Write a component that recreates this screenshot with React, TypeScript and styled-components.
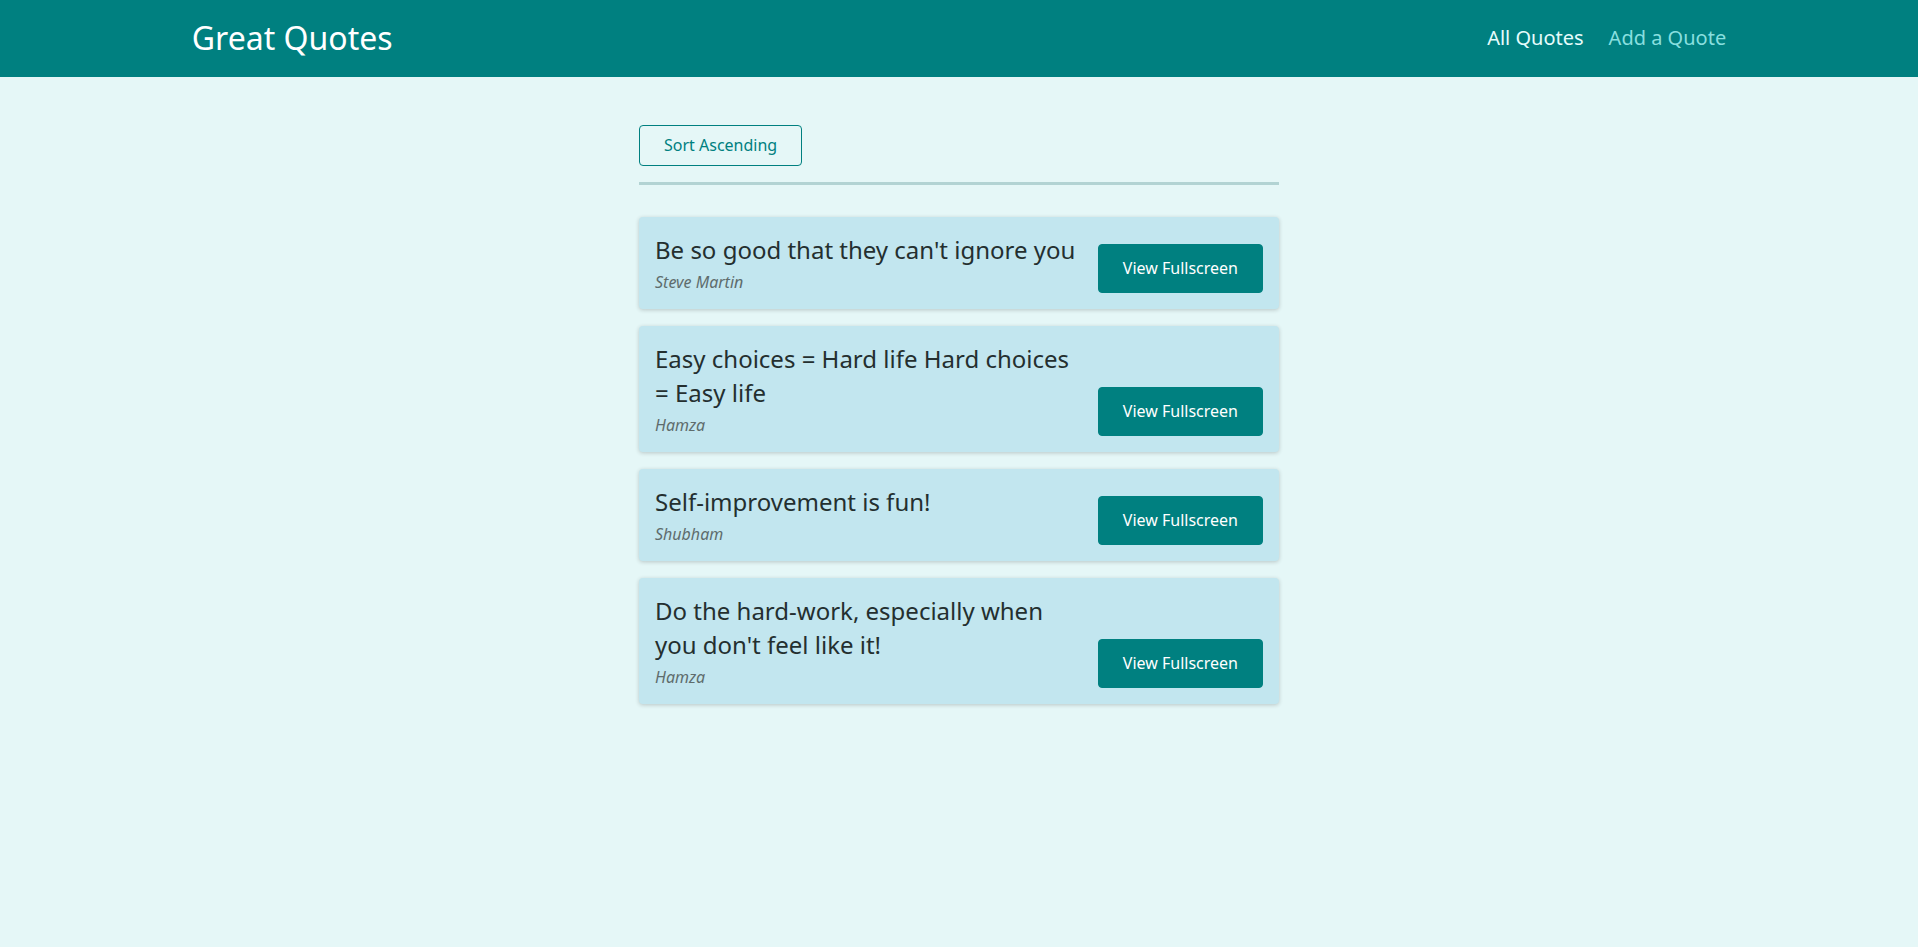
import React from "react";
import styled, { createGlobalStyle } from "styled-components";

const GlobalStyle = createGlobalStyle`
  * { box-sizing: border-box; }
  html, body {
    margin: 0;
    padding: 0;
    background: #e5f7f7;
    font-family: "Noto Sans", "Open Sans", sans-serif;
    min-height: 100%;
  }
`;

const Header = styled.header`
  width: 100%;
  height: 77px;
  display: flex;
  align-items: center;
  justify-content: space-between;
  background: #008080;
  padding: 0 10% 2px;
`;

const Logo = styled.div`
  font-size: 32px;
  color: #ffffff;
`;

const NavList = styled.ul`
  list-style: none;
  margin: 0 0 1px;
  padding: 0;
  display: flex;
  align-items: center;
  gap: 25px;
`;

const NavLink = styled.a<{ $active?: boolean }>`
  font-size: 20px;
  text-decoration: none;
  color: ${(p) => (p.$active ? "#e6fcfc" : "#88dfdf")};
  cursor: pointer;
`;

const Main = styled.main`
  width: 640px;
  margin: 48px auto;
`;

const Sorting = styled.div`
  padding-bottom: 16px;
  border-bottom: 3px solid #b2d3d3;
  margin-bottom: 32px;
`;

const FlatButton = styled.button`
  font-family: inherit;
  font-size: 16px;
  line-height: 23px;
  padding: 8px 24px;
  border: 1px solid #008080;
  border-radius: 4px;
  background: transparent;
  color: #008080;
  cursor: pointer;
`;

const List = styled.ul`
  list-style: none;
  margin: 0;
  padding: 0;
  display: flex;
  flex-direction: column;
  gap: 17px;
`;

const Item = styled.li`
  display: flex;
  align-items: flex-end;
  justify-content: space-between;
  gap: 16px;
  padding: 16px;
  border-radius: 4px;
  background: #c2e6ef;
  box-shadow: 0 1px 4px rgba(0, 0, 0, 0.2);
`;

const Figure = styled.figure`
  margin: 0;
  flex: 1;
  min-width: 0;
`;

const Quote = styled.blockquote`
  margin: 0;
  padding: 0;
  font-size: 24px;
  line-height: 34px;
  color: #242f2f;
`;

const Caption = styled.figcaption`
  margin-top: 4px;
  font-size: 16px;
  line-height: 22px;
  font-style: italic;
  color: #5e6c6c;
`;

const FullButton = styled.a`
  flex-shrink: 0;
  display: inline-block;
  font-size: 16px;
  line-height: 23px;
  padding: 12px 24px;
  border: 1px solid #008080;
  border-radius: 4px;
  background: #008080;
  color: #ffffff;
  text-decoration: none;
  cursor: pointer;
`;

const quotes = [
  { id: 1, text: "Be so good that they can't ignore you", author: "Steve Martin" },
  { id: 2, text: "Easy choices = Hard life Hard choices = Easy life", author: "Hamza" },
  { id: 3, text: "Self-improvement is fun!", author: "Shubham" },
  { id: 4, text: "Do the hard-work, especially when you don't feel like it!", author: "Hamza" },
];

export default function App() {
  return (
    <>
      <GlobalStyle />
      <Header>
        <Logo>Great Quotes</Logo>
        <nav>
          <NavList>
            <li>
              <NavLink $active>All Quotes</NavLink>
            </li>
            <li>
              <NavLink>Add a Quote</NavLink>
            </li>
          </NavList>
        </nav>
      </Header>
      <Main>
        <Sorting>
          <FlatButton>Sort Ascending</FlatButton>
        </Sorting>
        <List>
          {quotes.map((q) => (
            <Item key={q.id}>
              <Figure>
                <Quote>{q.text}</Quote>
                <Caption>{q.author}</Caption>
              </Figure>
              <FullButton>View Fullscreen</FullButton>
            </Item>
          ))}
        </List>
      </Main>
    </>
  );
}
